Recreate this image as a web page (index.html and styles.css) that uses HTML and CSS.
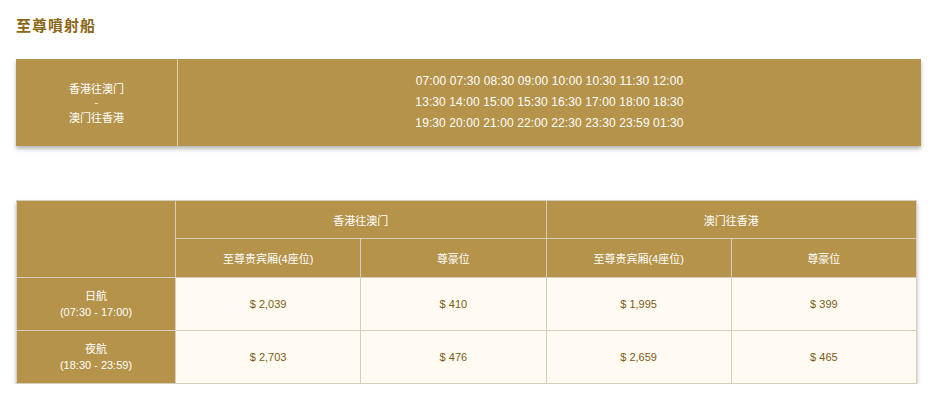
FILE: index.html
```
<!DOCTYPE html>
<html lang="zh">
<head>
<meta charset="utf-8">
<title>至尊噴射船</title>
<link rel="stylesheet" href="styles.css">
</head>
<body>
<div class="page">
  <h2 class="title">至尊噴射船</h2>

  <table class="sched">
    <tr>
      <td class="route">香港往澳门<br>-<br>澳门往香港</td>
      <td class="times">07:00 07:30 08:30 09:00 10:00 10:30 11:30 12:00<br>13:30 14:00 15:00 15:30 16:30 17:00 18:00 18:30<br>19:30 20:00 21:00 22:00 22:30 23:30 23:59 01:30</td>
    </tr>
  </table>

  <table class="fares">
    <tr class="h1">
      <th class="corner" rowspan="2"></th>
      <th colspan="2">香港往澳门</th>
      <th colspan="2">澳门往香港</th>
    </tr>
    <tr class="h2">
      <th>至尊贵宾厢(4座位)</th>
      <th>尊豪位</th>
      <th>至尊贵宾厢(4座位)</th>
      <th>尊豪位</th>
    </tr>
    <tr class="row">
      <th class="label">日航<br>(07:30 - 17:00)</th>
      <td>$ 2,039</td>
      <td>$ 410</td>
      <td>$ 1,995</td>
      <td>$ 399</td>
    </tr>
    <tr class="row">
      <th class="label">夜航<br>(18:30 - 23:59)</th>
      <td>$ 2,703</td>
      <td>$ 476</td>
      <td>$ 2,659</td>
      <td>$ 465</td>
    </tr>
  </table>
</div>
</body>
</html>
```

FILE: styles.css
```
html, body {
  margin: 0;
  padding: 0;
  background: #ffffff;
}
body {
  font-family: "Liberation Sans", Arial, "Noto Sans CJK SC", sans-serif;
  font-size: 11px;
}
.page {
  padding: 14px 0 0 16px;
  width: 905px;
}
.title {
  margin: 0;
  height: 22px;
  line-height: 22px;
  font-size: 15px;
  font-weight: bold;
  color: #8a6612;
  font-family: "Noto Sans CJK TC", "Noto Sans CJK SC", sans-serif;
  letter-spacing: 1px;
}
.sched {
  margin-top: 23px;
  width: 905px;
  height: 87px;
  border-collapse: collapse;
  background: #b5934a;
  box-shadow: 0 3px 4px rgba(0, 0, 0, 0.28);
  color: #ffffff;
}
.sched td {
  padding: 0;
  text-align: center;
  vertical-align: middle;
}
.route {
  width: 161px;
  border-right: 1px solid #ddd1b2;
  font-family: "Noto Sans CJK SC", sans-serif;
  font-size: 11px;
  line-height: 14.5px;
}
.times {
  font-size: 12px;
  line-height: 21px;
  letter-spacing: 0.1px;
}
.fares {
  margin-top: 54px;
  width: 901px;
  border-collapse: collapse;
  box-shadow: 0 3px 4px rgba(0, 0, 0, 0.28);
  table-layout: fixed;
}
.fares th, .fares td {
  border: 1px solid #d6cdbb;
  padding: 0;
  text-align: center;
  vertical-align: middle;
  font-weight: normal;
}
.fares th {
  background: #b5934a;
  color: #ffffff;
  font-family: "Liberation Sans", Arial, "Noto Sans CJK SC", sans-serif;
  font-size: 11px;
}
.fares th.corner {
  width: 158px;
}
.fares .h1 th { height: 37px; }
.fares .h2 th { height: 38px; }
.fares .row th, .fares .row td { height: 52px; }
.fares th.label {
  line-height: 16px;
}
.fares td {
  background: #fffbf2;
  color: #7a5c16;
  font-size: 11px;
}
```
